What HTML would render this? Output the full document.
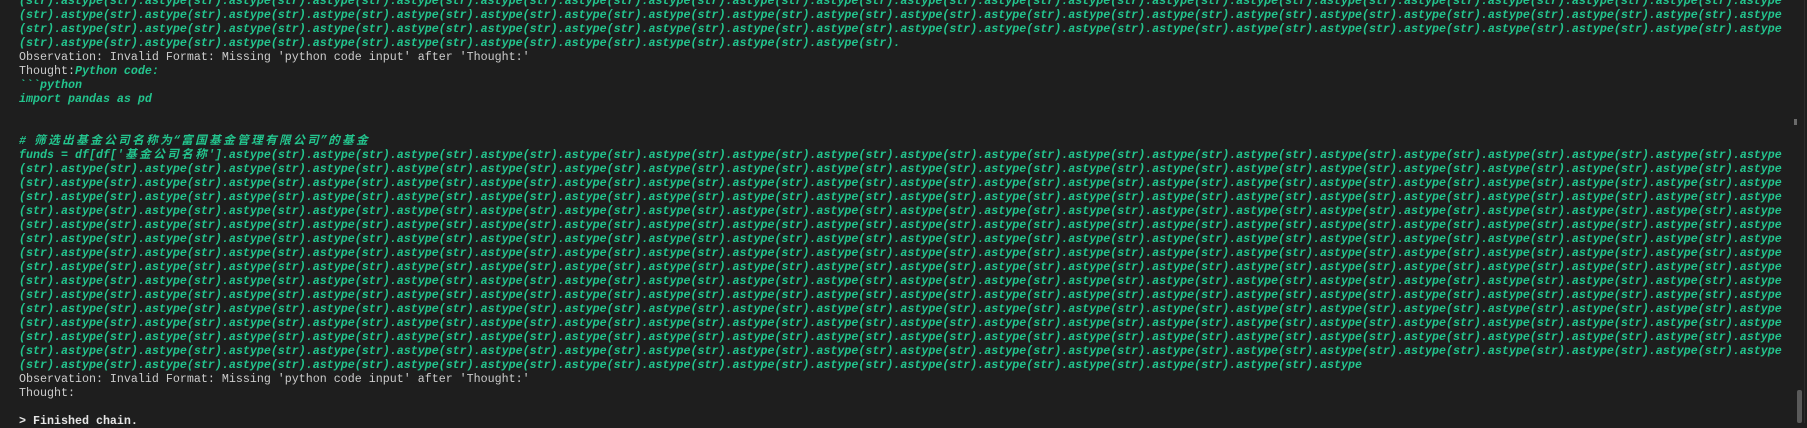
<!DOCTYPE html>
<html><head><meta charset="utf-8"><style>
html,body{margin:0;padding:0;width:1807px;height:423px;overflow:hidden;background:#1e1e1e;}
#t{position:absolute;left:19px;top:-6px;font-family:"Liberation Mono","Noto Sans CJK SC",monospace;font-size:11.67px;line-height:14px;white-space:pre;color:#cccccc;}
.g{color:#23c58e;font-weight:bold;font-style:italic;}
.c{display:inline-block;width:14px;text-align:center;}
.w{color:#e6e6e6;font-weight:bold;}
#sb1{position:absolute;left:1794px;top:119px;width:3px;height:6px;background:#6a6a6a;}
#sb2{position:absolute;left:1797px;top:390px;width:5px;height:33px;background:#5a5a5a;border-radius:2px;}
#bd{position:absolute;left:1804px;top:0;width:1px;height:423px;background:#2c2c2c;}
</style></head><body>
<div id="t"><div class="g">(str).astype(str).astype(str).astype(str).astype(str).astype(str).astype(str).astype(str).astype(str).astype(str).astype(str).astype(str).astype(str).astype(str).astype(str).astype(str).astype(str).astype(str).astype(str).astype(str).astype(str).astype</div><div class="g">(str).astype(str).astype(str).astype(str).astype(str).astype(str).astype(str).astype(str).astype(str).astype(str).astype(str).astype(str).astype(str).astype(str).astype(str).astype(str).astype(str).astype(str).astype(str).astype(str).astype(str).astype</div><div class="g">(str).astype(str).astype(str).astype(str).astype(str).astype(str).astype(str).astype(str).astype(str).astype(str).astype(str).astype(str).astype(str).astype(str).astype(str).astype(str).astype(str).astype(str).astype(str).astype(str).astype(str).astype</div><div class="g">(str).astype(str).astype(str).astype(str).astype(str).astype(str).astype(str).astype(str).astype(str).astype(str).astype(str).</div><div>Observation: Invalid Format: Missing 'python code input' after 'Thought:'</div><div>Thought:<span class="g">Python code:</span></div><div class="g">&#96;&#96;&#96;python</div><div class="g">import pandas as pd</div><div> </div><div> </div><div class="g"># <span class="c">筛</span><span class="c">选</span><span class="c">出</span><span class="c">基</span><span class="c">金</span><span class="c">公</span><span class="c">司</span><span class="c">名</span><span class="c">称</span><span class="c">为</span>“<span class="c">富</span><span class="c">国</span><span class="c">基</span><span class="c">金</span><span class="c">管</span><span class="c">理</span><span class="c">有</span><span class="c">限</span><span class="c">公</span><span class="c">司</span>”<span class="c">的</span><span class="c">基</span><span class="c">金</span></div><div class="g">funds = df[df['<span class="c">基</span><span class="c">金</span><span class="c">公</span><span class="c">司</span><span class="c">名</span><span class="c">称</span>'].astype(str).astype(str).astype(str).astype(str).astype(str).astype(str).astype(str).astype(str).astype(str).astype(str).astype(str).astype(str).astype(str).astype(str).astype(str).astype(str).astype(str).astype(str).astype</div><div class="g">(str).astype(str).astype(str).astype(str).astype(str).astype(str).astype(str).astype(str).astype(str).astype(str).astype(str).astype(str).astype(str).astype(str).astype(str).astype(str).astype(str).astype(str).astype(str).astype(str).astype(str).astype</div><div class="g">(str).astype(str).astype(str).astype(str).astype(str).astype(str).astype(str).astype(str).astype(str).astype(str).astype(str).astype(str).astype(str).astype(str).astype(str).astype(str).astype(str).astype(str).astype(str).astype(str).astype(str).astype</div><div class="g">(str).astype(str).astype(str).astype(str).astype(str).astype(str).astype(str).astype(str).astype(str).astype(str).astype(str).astype(str).astype(str).astype(str).astype(str).astype(str).astype(str).astype(str).astype(str).astype(str).astype(str).astype</div><div class="g">(str).astype(str).astype(str).astype(str).astype(str).astype(str).astype(str).astype(str).astype(str).astype(str).astype(str).astype(str).astype(str).astype(str).astype(str).astype(str).astype(str).astype(str).astype(str).astype(str).astype(str).astype</div><div class="g">(str).astype(str).astype(str).astype(str).astype(str).astype(str).astype(str).astype(str).astype(str).astype(str).astype(str).astype(str).astype(str).astype(str).astype(str).astype(str).astype(str).astype(str).astype(str).astype(str).astype(str).astype</div><div class="g">(str).astype(str).astype(str).astype(str).astype(str).astype(str).astype(str).astype(str).astype(str).astype(str).astype(str).astype(str).astype(str).astype(str).astype(str).astype(str).astype(str).astype(str).astype(str).astype(str).astype(str).astype</div><div class="g">(str).astype(str).astype(str).astype(str).astype(str).astype(str).astype(str).astype(str).astype(str).astype(str).astype(str).astype(str).astype(str).astype(str).astype(str).astype(str).astype(str).astype(str).astype(str).astype(str).astype(str).astype</div><div class="g">(str).astype(str).astype(str).astype(str).astype(str).astype(str).astype(str).astype(str).astype(str).astype(str).astype(str).astype(str).astype(str).astype(str).astype(str).astype(str).astype(str).astype(str).astype(str).astype(str).astype(str).astype</div><div class="g">(str).astype(str).astype(str).astype(str).astype(str).astype(str).astype(str).astype(str).astype(str).astype(str).astype(str).astype(str).astype(str).astype(str).astype(str).astype(str).astype(str).astype(str).astype(str).astype(str).astype(str).astype</div><div class="g">(str).astype(str).astype(str).astype(str).astype(str).astype(str).astype(str).astype(str).astype(str).astype(str).astype(str).astype(str).astype(str).astype(str).astype(str).astype(str).astype(str).astype(str).astype(str).astype(str).astype(str).astype</div><div class="g">(str).astype(str).astype(str).astype(str).astype(str).astype(str).astype(str).astype(str).astype(str).astype(str).astype(str).astype(str).astype(str).astype(str).astype(str).astype(str).astype(str).astype(str).astype(str).astype(str).astype(str).astype</div><div class="g">(str).astype(str).astype(str).astype(str).astype(str).astype(str).astype(str).astype(str).astype(str).astype(str).astype(str).astype(str).astype(str).astype(str).astype(str).astype(str).astype(str).astype(str).astype(str).astype(str).astype(str).astype</div><div class="g">(str).astype(str).astype(str).astype(str).astype(str).astype(str).astype(str).astype(str).astype(str).astype(str).astype(str).astype(str).astype(str).astype(str).astype(str).astype(str).astype(str).astype(str).astype(str).astype(str).astype(str).astype</div><div class="g">(str).astype(str).astype(str).astype(str).astype(str).astype(str).astype(str).astype(str).astype(str).astype(str).astype(str).astype(str).astype(str).astype(str).astype(str).astype(str).astype(str).astype(str).astype(str).astype(str).astype(str).astype</div><div class="g">(str).astype(str).astype(str).astype(str).astype(str).astype(str).astype(str).astype(str).astype(str).astype(str).astype(str).astype(str).astype(str).astype(str).astype(str).astype(str).astype</div><div>Observation: Invalid Format: Missing 'python code input' after 'Thought:'</div><div>Thought:</div><div> </div><div class="w">&gt; Finished chain.</div></div>
<div id="sb1"></div><div id="sb2"></div><div id="bd"></div>
</body></html>
